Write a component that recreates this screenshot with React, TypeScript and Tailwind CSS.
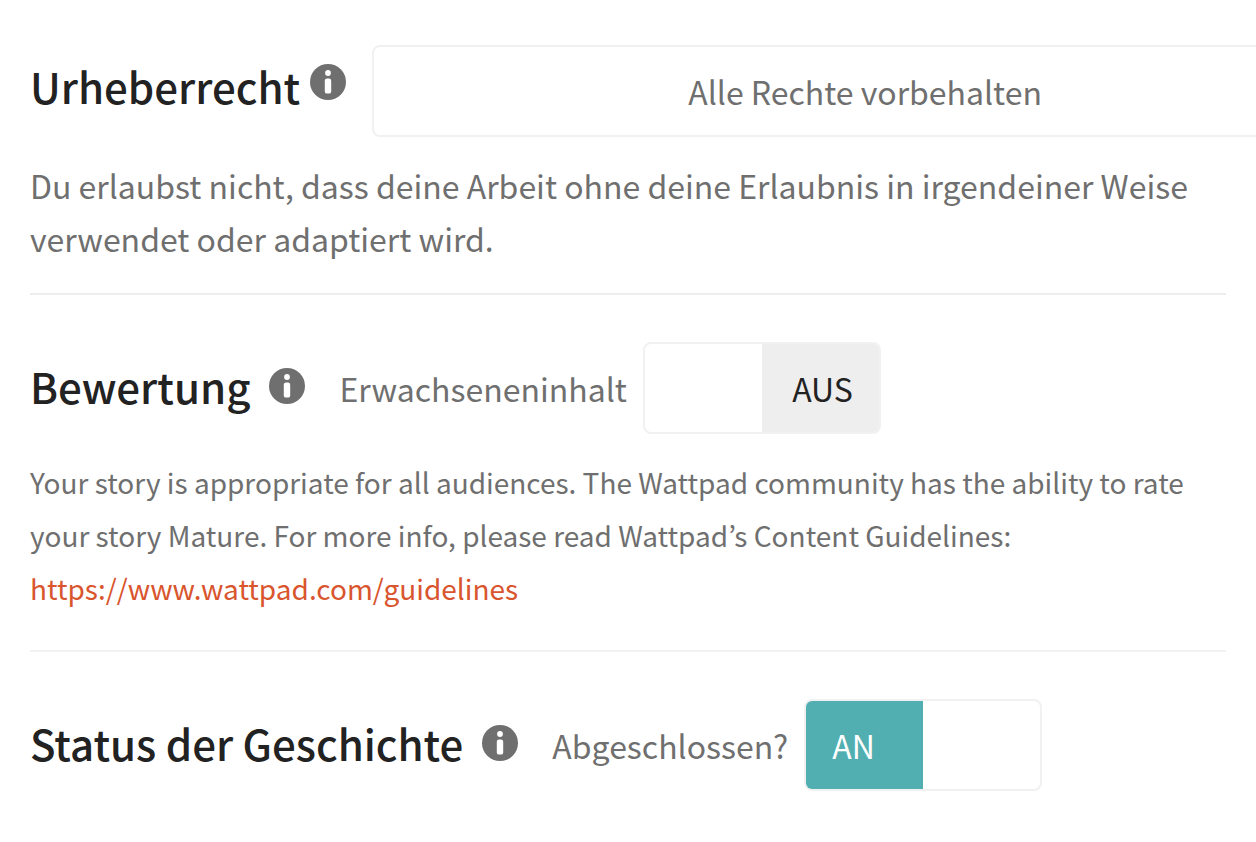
import { useState } from 'react'
import type { ReactNode } from 'react'

function InfoIcon() {
  return (
    <svg viewBox="0 0 36 36" className="block size-9">
      <circle cx="18" cy="18" r="18" fill="#6f6f6f" />
      <circle cx="18" cy="9" r="2.9" fill="#fff" />
      <rect x="14.8" y="14.6" width="6.4" height="15" rx="2.2" fill="#fff" />
    </svg>
  )
}

function InfoButton({ label }: { label: string }) {
  return (
    <button type="button" aria-label={label} className="block shrink-0 cursor-pointer">
      <InfoIcon />
    </button>
  )
}

function Heading({ children }: { children: ReactNode }) {
  return <h2 className="shrink-0 whitespace-nowrap text-[42px] leading-[56px] font-medium text-[#222222]">{children}</h2>
}

type ToggleProps = {
  label: string
  checked: boolean
  onChange: (value: boolean) => void
}

function Toggle({ label, checked, onChange }: ToggleProps) {
  return (
    <label className="flex cursor-pointer items-center gap-4 text-[32px] leading-[53px] text-[#6f6f6f]">
      <span className="whitespace-nowrap">{label}</span>
      <span className="relative grid h-[92px] w-[238px] shrink-0 grid-cols-2 overflow-hidden rounded-lg border-2 border-[#f1f1f1] bg-white">
        <input
          type="checkbox"
          checked={checked}
          onChange={(e) => onChange(e.target.checked)}
          className="absolute inset-0 size-full cursor-pointer opacity-0"
        />
        {checked ? (
          <span className="flex items-center bg-[#51aeb1] pl-[26px] text-white">AN</span>
        ) : (
          <span className="col-start-2 flex items-center justify-end bg-[#eeeeee] pr-[26px] text-[#222222]">AUS</span>
        )}
      </span>
    </label>
  )
}

export default function App() {
  const [mature, setMature] = useState(false)
  const [completed, setCompleted] = useState(true)

  return (
    <main className="min-h-screen overflow-hidden bg-white px-[30px] pt-[45px] pb-[50px] font-['Noto_Sans_CJK_KR',sans-serif] text-[#6f6f6f]">
      <section className="border-b-2 border-[#eeeeee] pb-7">
        <div className="flex items-center">
          <div className="flex items-start gap-2.5 pb-2.5">
            <Heading>Urheberrecht</Heading>
            <div className="pt-1.5">
              <InfoButton label="Info zum Urheberrecht" />
            </div>
          </div>
          <select
            aria-label="Urheberrecht"
            className="ml-[26px] h-[92px] w-[986px] shrink-0 cursor-pointer appearance-none rounded-lg border-2 border-[#f1f1f1] bg-white text-center text-[32px] text-[#6f6f6f] [text-align-last:center]"
          >
            <option>Alle Rechte vorbehalten</option>
          </select>
        </div>
        <p className="mt-[22px] text-[32px] leading-[53px]">
          Du erlaubst nicht, dass deine Arbeit ohne deine Erlaubnis in irgendeiner Weise verwendet oder adaptiert wird.
        </p>
      </section>

      <section className="border-b-2 border-[#f2f2f2] pt-[47px] pb-[35px]">
        <div className="flex items-center">
          <div className="mr-[34px] flex items-center gap-[19px] pb-1">
            <Heading>Bewertung</Heading>
            <InfoButton label="Info zur Bewertung" />
          </div>
          <Toggle label="Erwachseneninhalt" checked={mature} onChange={setMature} />
        </div>
        <p className="mt-[22px] text-[28px] leading-[53px]">
          Your story is appropriate for all audiences. The Wattpad community has the ability to rate your story Mature.
          For more info, please read Wattpad’s Content Guidelines:
          <br />
          <a href="https://www.wattpad.com/guidelines" className="text-[#d9552e]">
            https://www.wattpad.com/guidelines
          </a>
        </p>
      </section>

      <section className="pt-[47px]">
        <div className="flex items-center">
          <div className="mr-[34px] flex items-center gap-[19px] pb-1">
            <Heading>Status der Geschichte</Heading>
            <InfoButton label="Info zum Status der Geschichte" />
          </div>
          <Toggle label="Abgeschlossen?" checked={completed} onChange={setCompleted} />
        </div>
      </section>
    </main>
  )
}
